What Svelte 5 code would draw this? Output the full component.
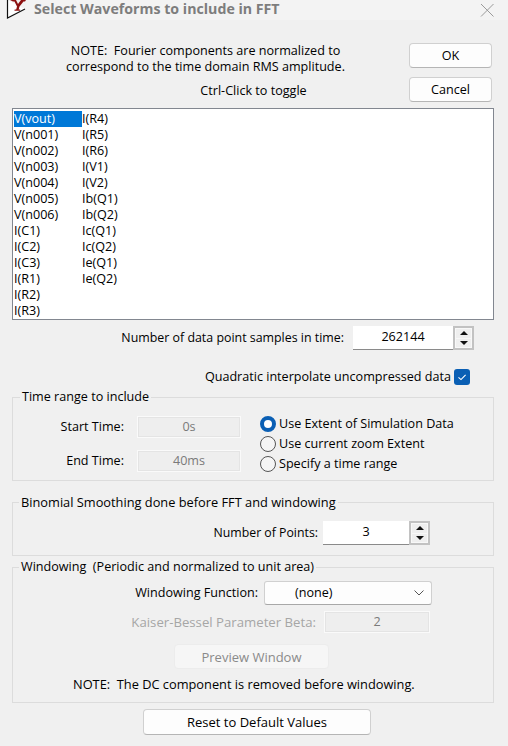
<script>
  const col1 = ['V(vout)', 'V(n001)', 'V(n002)', 'V(n003)', 'V(n004)', 'V(n005)', 'V(n006)', 'I(C1)', 'I(C2)', 'I(C3)', 'I(R1)', 'I(R2)', 'I(R3)'];
  const col2 = ['I(R4)', 'I(R5)', 'I(R6)', 'I(V1)', 'I(V2)', 'Ib(Q1)', 'Ib(Q2)', 'Ic(Q1)', 'Ic(Q2)', 'Ie(Q1)', 'Ie(Q2)'];
  const ranges = ['Use Extent of Simulation Data', 'Use current zoom Extent', 'Specify a time range'];
</script>

<div class="dialog">
  <header class="titlebar">
    <svg class="logo" width="27" height="20" viewBox="0 0 27 20">
      <path d="M7.5 0 V18 L25 9" fill="#fff" stroke="#111" stroke-width="1.2" />
      <path d="M10 0 h6 l2 4 l3 -4 h5 l-1 1.5 h-1.5 l-4 5 l-.8 3 h1.5 l-.3 1.2 h-5.5 l.3 -1.2 h1.5 l.8 -3 l-2.5 -5 h-1.5 z" fill="#8c1010" />
    </svg>
    <span class="title">Select Waveforms to include in FFT</span>
    <svg class="close" width="14" height="14" viewBox="0 0 14 14">
      <path d="M1 1 L13.5 13.5 M13.5 1 L1 13.5" stroke="#9a9a9a" stroke-width="1" fill="none" />
    </svg>
  </header>

  <section class="top">
    <div class="notes">
      <p class="note">NOTE:&nbsp; Fourier components are normalized to<br />correspond to the time domain RMS amplitude.</p>
      <p class="toggle">Ctrl-Click to toggle</p>
    </div>
    <div class="actions">
      <button class="btn ok">OK</button>
      <button class="btn ok">Cancel</button>
    </div>
  </section>

  <div class="listbox">
    <div class="col first">
      {#each col1 as name, i}
        <div class="item" class:selected={i === 0}>{name}</div>
      {/each}
    </div>
    <div class="col">
      {#each col2 as name}
        <div class="item">{name}</div>
      {/each}
    </div>
  </div>

  <div class="row samples">
    <span>Number of data point samples in time:</span>
    <div class="spin wide">
      <div class="spin-value">262144</div>
      <div class="spin-arrows"><i class="up"></i><i class="down"></i></div>
    </div>
  </div>

  <div class="row quad">
    <span>Quadratic interpolate uncompressed data</span>
    <svg class="check" width="16" height="16" viewBox="0 0 16 16">
      <rect width="16" height="16" rx="3" fill="#0a5fb4" />
      <path d="M4.5 8.3 L7 10.6 L11.6 5.8" stroke="#fff" stroke-width="1.1" fill="none" />
    </svg>
  </div>

  <fieldset class="group time">
    <legend>Time range to include</legend>
    <div class="time-body">
      <div class="time-fields">
        <div class="field"><span>Start Time:</span><div class="disabled-box">0s</div></div>
        <div class="field"><span>End Time:</span><div class="disabled-box">40ms</div></div>
      </div>
      <div class="radios">
        {#each ranges as label, i}
          <div class="radio-row">
            <span class="radio" class:on={i === 0}></span>
            <span>{label}</span>
          </div>
        {/each}
      </div>
    </div>
  </fieldset>

  <fieldset class="group smooth">
    <legend>Binomial Smoothing done before FFT and windowing</legend>
    <div class="row points">
      <span>Number of Points:</span>
      <div class="spin narrow">
        <div class="spin-value">3</div>
        <div class="spin-arrows"><i class="up"></i><i class="down"></i></div>
      </div>
    </div>
  </fieldset>

  <fieldset class="group windowing">
    <legend>Windowing&nbsp; (Periodic and normalized to unit area)</legend>
    <div class="row func">
      <span>Windowing Function:</span>
      <div class="select">
        <span class="select-value">(none)</span>
        <svg width="10" height="6" viewBox="0 0 10 6"><path d="M0.5 0.5 L5 5 L9.5 0.5" stroke="#555" fill="none" /></svg>
      </div>
    </div>
    <div class="row beta">
      <span class="muted">Kaiser-Bessel Parameter Beta:</span>
      <div class="disabled-box beta-box">2</div>
    </div>
    <button class="btn preview" disabled>Preview Window</button>
    <p class="dc">NOTE:&nbsp; The DC component is removed before windowing.</p>
  </fieldset>

  <button class="btn reset">Reset to Default Values</button>
</div>

<style>
  :global(body) {
    margin: 0;
    background: #f0f0f0;
  }

  .dialog {
    width: 508px;
    height: 746px;
    overflow: hidden;
    box-sizing: border-box;
    padding: 0 14px 0 12px;
    background: #f0f0f0;
    color: #000;
    font-family: "Open Sans", "Noto Sans", sans-serif;
    font-size: 12.6px;
    line-height: 16px;
  }

  .titlebar {
    display: flex;
    align-items: flex-start;
    height: 20px;
    margin: 0 -14px 0 -12px;
    background: #f3f3f3;
    position: relative;
  }

  .logo {
    flex: none;
  }

  .title {
    margin-left: 7px;
    margin-top: 1px;
    color: #7d7d7d;
    font-weight: 700;
    font-size: 14.2px;
  }

  .close {
    position: absolute;
    left: 480px;
    top: 3px;
  }

  .top {
    display: flex;
    height: 88px;
  }

  .notes {
    flex: 1;
    text-align: center;
    padding-right: 10px;
  }

  .note {
    margin: 23px 0 0;
  }

  .toggle {
    margin: 8px 0 0 96px;
  }

  .actions {
    width: 83px;
    margin-right: 2px;
    padding-top: 23px;
    display: flex;
    flex-direction: column;
    gap: 9px;
  }

  .btn {
    font: inherit;
    color: #000;
    background: #fdfdfd;
    border: 1px solid #d0d0d0;
    border-bottom-color: #b5b5b5;
    border-radius: 4px;
    padding: 0;
  }

  .ok {
    height: 25px;
  }

  .listbox {
    display: flex;
    height: 212px;
    box-sizing: border-box;
    background: #fff;
    border: 1px solid #828790;
    padding: 2px 1px;
  }

  .col {
    width: 68px;
  }

  .item {
    height: 16px;
    line-height: 16px;
  }

  .selected {
    background: #0078d7;
    color: #fff;
  }

  .row {
    display: flex;
    align-items: center;
    justify-content: flex-end;
  }

  .samples {
    margin-top: 6px;
    padding-right: 20px;
    gap: 9px;
  }

  .samples span {
    font-size: 12.4px;
  }

  .spin {
    display: flex;
    height: 24px;
    background: #fff;
    border-bottom: 1px solid #8a8a8a;
    box-sizing: border-box;
  }

  .wide {
    width: 121px;
  }

  .narrow {
    width: 107px;
  }

  .spin-value {
    flex: 1;
    text-align: center;
    line-height: 22px;
  }

  .spin-arrows {
    width: 21px;
    height: 24px;
    flex: none;
    box-sizing: border-box;
    border: 2px solid #c2c2c2;
    background: #f8f8f8;
    padding: 1px;
    display: flex;
    flex-direction: column;
    gap: 1px;
  }

  .spin-arrows i {
    flex: 1;
    background: #efefef;
    display: flex;
    align-items: center;
    justify-content: center;
  }

  .spin-arrows i::after {
    content: "";
    border-left: 4px solid transparent;
    border-right: 4px solid transparent;
  }

  .up::after {
    border-bottom: 4px solid #111;
  }

  .down::after {
    border-top: 4px solid #111;
  }

  .quad {
    margin-top: 19px;
    padding-right: 24px;
    gap: 3px;
  }

  .check {
    flex: none;
  }

  .group {
    margin: 0;
    padding: 0;
    border: 1px solid #dcdcdc;
    min-width: 0;
  }

  .group legend {
    margin-left: 7px;
    padding: 0 2px;
    line-height: 16px;
  }

  .time {
    margin-top: 4px;
    height: 90px;
  }

  .time-body {
    display: flex;
    padding-top: 11px;
  }

  .time-fields {
    width: 228px;
    display: flex;
    flex-direction: column;
    gap: 12px;
  }

  .field {
    display: flex;
    align-items: center;
    justify-content: flex-end;
    gap: 13px;
  }

  .disabled-box {
    box-sizing: border-box;
    width: 104px;
    height: 22px;
    line-height: 19px;
    text-align: center;
    color: #7a7a7a;
    border: 1px solid #fafafa;
    outline: 1px solid #e4e4e4;
    outline-offset: -2px;
    background: #eeeeee;
  }

  .radios {
    margin-left: 19px;
    display: flex;
    flex-direction: column;
    gap: 4px;
  }

  .radio-row {
    display: flex;
    align-items: center;
    gap: 3px;
    height: 16px;
  }

  .radio {
    box-sizing: border-box;
    width: 16px;
    height: 16px;
    border-radius: 50%;
    border: 1px solid #555;
    background: #f5f5f5;
  }

  .radio.on {
    border: 4.5px solid #0a5fb4;
    background: #fff;
  }

  .smooth {
    margin-top: 13px;
    height: 60px;
  }

  .smooth legend {
    margin-left: 6px;
    font-size: 12.8px;
  }

  .points {
    margin-top: 11px;
    padding-right: 63px;
    gap: 5px;
  }

  .points span {
    font-size: 12.3px;
  }

  .windowing {
    margin-top: 3px;
    height: 142px;
  }

  .windowing legend {
    margin-left: 6px;
  }

  .func {
    margin-top: 6px;
    padding-right: 61px;
    gap: 6px;
  }

  .select {
    box-sizing: border-box;
    width: 168px;
    height: 24px;
    display: flex;
    align-items: center;
    padding: 0 7px 0 30px;
    background: #fdfdfd;
    border: 1px solid #d0d0d0;
    border-bottom-color: #a8a8a8;
    border-radius: 3px;
  }

  .select-value {
    flex: 1;
  }

  .beta {
    margin-top: 6px;
    padding-right: 63px;
    gap: 8px;
  }

  .muted {
    color: #a6a6a6;
    font-size: 13.2px;
  }

  .beta-box {
    width: 106px;
  }

  .preview {
    display: block;
    width: 155px;
    height: 25px;
    margin: 11px 0 0 161px;
    color: #8a8a8a;
    background: #f6f6f6;
    border-color: #ececec;
    font-size: 13px;
  }

  .dc {
    margin: 7px 0 0;
    padding-left: 60px;
    font-size: 12.8px;
  }

  .reset {
    display: block;
    width: 228px;
    height: 26px;
    margin: 6px 0 0 131px;
    font-size: 13px;
  }
</style>
